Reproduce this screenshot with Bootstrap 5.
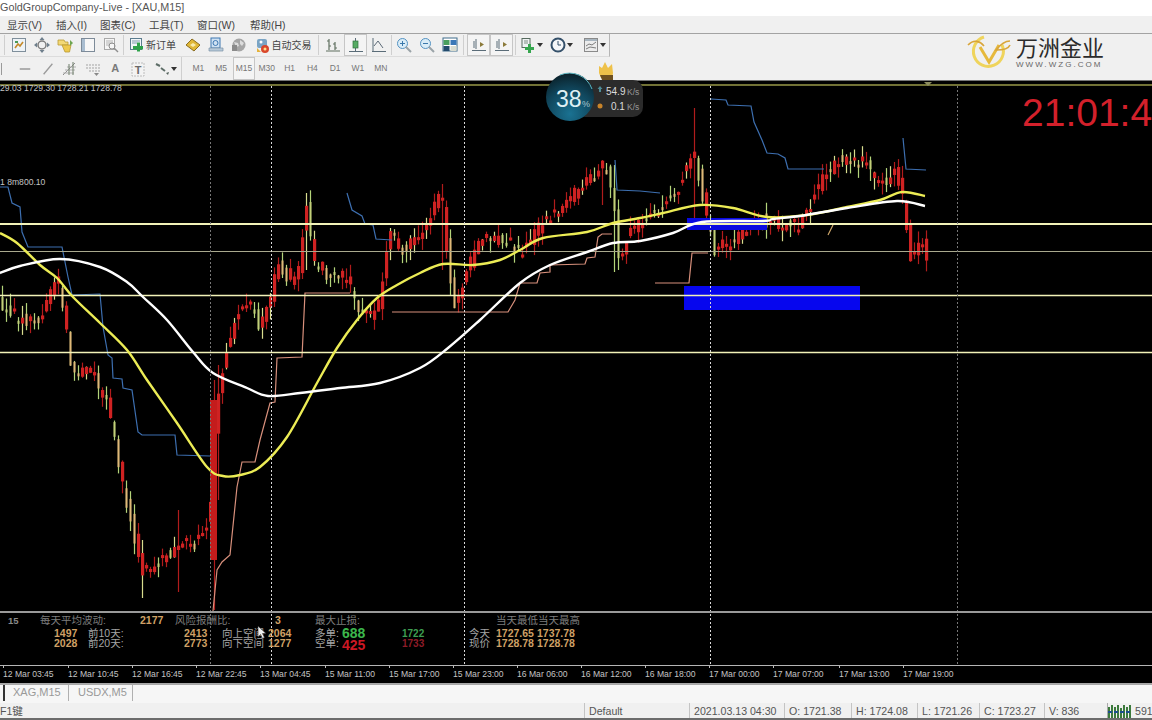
<!DOCTYPE html>
<html lang="zh">
<head>
<meta charset="utf-8">
<title>GoldGroupCompany-Live - [XAU,M15]</title>
<link href="https://cdn.jsdelivr.net/npm/bootstrap@5.3.0/dist/css/bootstrap.min.css" rel="stylesheet">
<style>
html,body{height:720px;overflow:hidden;background:#f0f0f0}
.t4-app{width:1152px;height:720px;position:relative;font-family:"Liberation Sans","Noto Sans CJK SC",sans-serif;color:#444}
.t4-title{height:16px;background:#fff;font-size:10.8px;line-height:14px;color:#555;white-space:nowrap}
.t4-menu{height:17px;background:#f0f0f0;font-size:10.5px;line-height:18px;color:#444;border-bottom:1px solid #a3a3a3;box-sizing:content-box}
.t4-menu span{position:relative}
.t4-mi{display:block;flex:none}
.t4-tools{height:46px;background:#f0f0f0}
.t4-row{height:23px;flex:none}
.t4-row1{border-bottom:1px solid #dcdcdc;width:610px;border-right:1px solid #b5b5b5}
.t4-b{height:22px;width:23px;flex:none;display:flex;align-items:center;justify-content:center;gap:1px;font-size:10px;color:#444;white-space:nowrap}
.t4-b svg{flex:none}
.t4-w22{width:22.5px}
.t4-on{background:#f4f4f4;outline:1px solid #c6c6c6;outline-offset:-1px}
.t4-per{width:22.8px;font-size:8.5px;color:#777;height:23px}
.t4-bar{width:1px;height:20px;background:#cfcfcf;flex:none}
.t4-chart{height:603px;background:#000;flex:none;border-top:1px solid #777;overflow:hidden}
.t4-chart svg{display:block}
.t4-blur{filter:blur(.6px)}
.t4-tabs{height:20px;background:#f6f6f6;border-top:2px solid #a8a8a8;font-size:11px;color:#999;line-height:17px}
.t4-tab{border-right:1px solid #b0b0b0;height:16px;line-height:15px;flex:none;white-space:nowrap}
.t4-status{height:17px;background:#f0f0f0;font-size:10.6px;color:#555;line-height:16px;border-bottom:2px solid #6c6c6c;white-space:nowrap;box-sizing:border-box;overflow:hidden}
.t4-cell{border-left:1px solid #c4c4c4;padding-left:4px;flex:none;height:15px}
.t4-logo{position:absolute;left:966px;top:33px;width:150px;height:46px}
.t4-logo b{position:absolute;left:50px;top:0;font:400 22px/27px "Noto Sans CJK SC",sans-serif;color:#2b2b2b;white-space:nowrap}
.t4-logo i{position:absolute;left:50px;top:27px;font:normal 8px/9px "Liberation Sans",sans-serif;letter-spacing:2.05px;color:#666;white-space:nowrap}
.t4-speed{position:absolute;left:545px;top:60px}
text{font-family:"Liberation Sans","Noto Sans CJK SC",sans-serif}
.t4-ax{font-size:8.6px;fill:#c4c4c4}
.t4-tan{font-size:10.5px;font-weight:700;fill:#cfa066}
.t4-dim{font-size:10.5px;fill:#7d7d7d}
.t4-lab{font-size:10.5px;fill:#a5a5a5}
</style>
</head>
<body class="m-0">
<svg width="0" height="0" class="position-absolute">
<defs>
<symbol id="i-chart" viewBox="0 0 16 16"><rect x="1.5" y="1.5" width="13" height="13" fill="#eef3f7" stroke="#7f8f9b"/><path d="M4 11l3-4 2 2 3-4" stroke="#c58a2a" stroke-width="1.6" fill="none"/><rect x="4" y="4" width="3" height="2" fill="#4a9a58"/></symbol>
<symbol id="i-move" viewBox="0 0 16 16"><circle cx="8" cy="8" r="4" fill="none" stroke="#7b7b7b" stroke-width="1.5"/><path d="M8 0l2.500 3h-5zM8 16l2.500-3h-5zM0 8l3-2.500v5zM16 8l-3-2.500v5z" fill="#6f7f8c"/></symbol>
<symbol id="i-folder" viewBox="0 0 16 16"><path d="M1 3h6l1 2h3v3H1z" fill="#f3d977" stroke="#b99a34" stroke-width=".8"/><path d="M5 8h9l-1.500 7H8z" fill="#eec94d" stroke="#b99a34" stroke-width=".8"/><path d="M13 3l3 3-3 3z" fill="#6ea550"/></symbol>
<symbol id="i-panel" viewBox="0 0 16 16"><rect x="1.500" y="1.500" width="13" height="13" fill="#f7f7f7" stroke="#7d8b99"/><rect x="2" y="2" width="3" height="12" fill="#a9bdd0"/></symbol>
<symbol id="i-docmag" viewBox="0 0 16 16"><rect x="1.500" y="1.500" width="10" height="11" fill="#f6f6f6" stroke="#a9a9a9"/><path d="M3 4h7M3 6h7M3 8h4" stroke="#b5b5b5"/><circle cx="9" cy="9" r="3" fill="none" stroke="#8e8e8e"/><path d="M11 11l4 4" stroke="#8e8e8e" stroke-width="1.500"/></symbol>
<symbol id="i-order" viewBox="0 0 16 16"><rect x="1.500" y="1.500" width="11" height="11" fill="#f2f6f8" stroke="#5b7c8e"/><path d="M3 4h8M3 6h5" stroke="#7f9bad"/><path d="M10 6v4H6v4h4v2h3v-2h3v-4h-3V6z" transform="translate(-2 0) scale(1 .9)" fill="#2ea24a"/></symbol>
<symbol id="i-dia" viewBox="0 0 16 16"><path d="M1 8l6-6 8 6-6 6z" fill="#e0b838" stroke="#8b6d1f"/><path d="M5 8l3-2 3 2-3 2z" fill="#f8ecb0"/></symbol>
<symbol id="i-blue" viewBox="0 0 16 16"><rect x="3" y="1" width="9" height="10" fill="#cfe1f2" stroke="#3e78b2"/><circle cx="7.500" cy="6" r="2.500" fill="none" stroke="#3e78b2"/><path d="M1 11h14v3H1z" fill="#b7c9d9" stroke="#7d94a8" stroke-width=".7"/></symbol>
<symbol id="i-globe" viewBox="0 0 16 16"><circle cx="8" cy="8" r="6.500" fill="#a5a5a5"/><path d="M3 5l4 1 1 3-3 1zM9 3l4 3-2 3-2-2z" fill="#dcdcdc"/><rect x="1" y="8" width="5" height="6" fill="#8a8a8a"/></symbol>
<symbol id="i-auto" viewBox="0 0 16 16"><rect x="2" y="2" width="10" height="9" rx="2" fill="#7aa4c4"/><circle cx="6" cy="5" r="1.500" fill="#fff"/><circle cx="10" cy="12" r="4" fill="#d9472b"/><circle cx="10" cy="12" r="1.500" fill="#ffe08a"/><path d="M2 11l4 4H2z" fill="#e5b23a"/></symbol>
<symbol id="i-bars" viewBox="0 0 16 16"><path d="M4 2v11M4 4H2M4 9h2M10 5v8M10 7H8M10 11h2M1 14h14" stroke="#5f6f5f" stroke-width="1.200" fill="none"/></symbol>
<symbol id="i-candle" viewBox="0 0 16 16"><path d="M7.500 1v13M1 14.500h14" stroke="#5a6c78" fill="none"/><rect x="5" y="4" width="5" height="7" fill="#56ab63" stroke="#2f6f3d" stroke-width=".7"/></symbol>
<symbol id="i-line" viewBox="0 0 16 16"><path d="M1 14.500h14M2 1v13" stroke="#5a6c78" fill="none"/><path d="M3 9l4-5 5 7" stroke="#5d6b78" fill="none"/></symbol>
<symbol id="i-zin" viewBox="0 0 16 16"><circle cx="6.500" cy="6.500" r="5" fill="#d9ecf7" stroke="#5492c2"/><path d="M4 6.500h5M6.500 4v5" stroke="#3a78ab"/><path d="M10 10l5 5" stroke="#9aa3a8" stroke-width="2"/></symbol>
<symbol id="i-zout" viewBox="0 0 16 16"><circle cx="6.500" cy="6.500" r="5" fill="#d9ecf7" stroke="#5492c2"/><path d="M4 6.500h5" stroke="#3a78ab"/><path d="M10 10l5 5" stroke="#9aa3a8" stroke-width="2"/></symbol>
<symbol id="i-grid" viewBox="0 0 16 16"><rect x="1" y="1" width="14" height="13" fill="#fff" stroke="#3f6d8c"/><rect x="1.500" y="3" width="6" height="5" fill="#4aa05e"/><rect x="8.500" y="3" width="6" height="5" fill="#3b78b8"/><rect x="1.500" y="9" width="6" height="5" fill="#234b6c"/><rect x="8.500" y="9" width="6" height="5" fill="#d9dcd0"/></symbol>
<symbol id="i-shift" viewBox="0 0 16 16"><path d="M5 2v10M3 4v7M1 13.500h14" stroke="#5a6c78" fill="none"/><path d="M9 5v5l4-2.500z" fill="#8b7a3a"/></symbol>
<symbol id="i-add" viewBox="0 0 16 16"><rect x="2" y="1.500" width="8" height="9" fill="#eef2f2" stroke="#566a5e"/><path d="M4 4h4M4 6h4" stroke="#7d8d82"/><path d="M8 7v3H5v3h3v3h3v-3h3v-3h-3V7z" fill="#35a64e"/></symbol>
<symbol id="i-clock" viewBox="0 0 16 16"><circle cx="8" cy="8" r="6.500" fill="#f5f7f9" stroke="#34506a" stroke-width="2"/><path d="M8 4v4h3" stroke="#34506a" fill="none"/></symbol>
<symbol id="i-tpl" viewBox="0 0 16 16"><rect x="1.500" y="1.500" width="13" height="13" fill="#ececec" stroke="#8a8a8a"/><rect x="2" y="2" width="12" height="2" fill="#a8b5bf"/><path d="M3 9l3-2 3 1 4-3M3 12l4-2 6 1" stroke="#7c7c7c" fill="none"/></symbol>
<symbol id="i-fib" viewBox="0 0 16 16"><path d="M1 14L13 2" stroke="#8b8b8b"/><path d="M3 9h10M5 6h9M1 12h11" stroke="#b0b0b0"/><path d="M7 3v11M11 1v13" stroke="#6f7f6a"/></symbol>
<symbol id="i-fan" viewBox="0 0 16 16"><path d="M1 4h14M1 7h14M4 10h11" stroke="#a3a3a3" stroke-dasharray="2 1"/><path d="M9 12h5l-2.500 3z" fill="#888"/></symbol>
<symbol id="i-tbox" viewBox="0 0 16 16"><path d="M2 2h12v13H2z" fill="#f3f3f3" stroke="#bcbcbc" stroke-dasharray="2 1"/><text x="8" y="12.500" font-size="11" text-anchor="middle" fill="#6a6a6a" font-weight="700">T</text></symbol>
<symbol id="i-shapes" viewBox="0 0 16 16"><path d="M2 3l4 2M7 7l4 3" stroke="#5e6e68" stroke-width="2"/><path d="M12 12l3-1-1 3z" fill="#54635d"/></symbol>
<symbol id="i-down" viewBox="0 0 6 4"><path d="M0 0h6L3 4z" fill="#333"/></symbol>
</defs>
</svg>

<div class="t4-app d-flex flex-column">
  <div class="t4-title">GoldGroupCompany-Live - [XAU,M15]</div>
  <nav class="t4-menu d-flex">
    <span class="t4-mi" style="margin-left:7px;width:49px">显示(V)</span>
    <span class="t4-mi" style="width:44px">插入(I)</span>
    <span class="t4-mi" style="width:49px">图表(C)</span>
    <span class="t4-mi" style="width:48px">工具(T)</span>
    <span class="t4-mi" style="width:53px">窗口(W)</span>
    <span class="t4-mi">帮助(H)</span>
  </nav>

  <div class="t4-tools d-flex flex-column">
    <div class="t4-row t4-row1 d-flex align-items-center">
      <div class="t4-bar" style="margin-left:4px;margin-right:2px"></div>
      <div class="t4-b"><svg width="16" height="16"><use href="#i-chart"/></svg></div>
      <div class="t4-b"><svg width="16" height="16"><use href="#i-move"/></svg></div>
      <div class="t4-b"><svg width="16" height="16"><use href="#i-folder"/></svg></div>
      <div class="t4-b"><svg width="16" height="16"><use href="#i-panel"/></svg></div>
      <div class="t4-b"><svg width="16" height="16"><use href="#i-docmag"/></svg></div>
      <div class="t4-bar" style="margin:0 .5px"></div>
      <div class="t4-b" style="width:57px"><svg width="16" height="16"><use href="#i-order"/></svg><span>新订单</span></div>
      <div class="t4-b"><svg width="16" height="16"><use href="#i-dia"/></svg></div>
      <div class="t4-b"><svg width="16" height="16"><use href="#i-blue"/></svg></div>
      <div class="t4-b"><svg width="16" height="16"><use href="#i-globe"/></svg></div>
      <div class="t4-b" style="width:66px"><svg width="16" height="16"><use href="#i-auto"/></svg><span>自动交易</span></div>
      <div class="t4-bar" style="margin:0 2px"></div>
      <div class="t4-b"><svg width="16" height="16"><use href="#i-bars"/></svg></div>
      <div class="t4-b t4-on"><svg width="16" height="16"><use href="#i-candle"/></svg></div>
      <div class="t4-b"><svg width="16" height="16"><use href="#i-line"/></svg></div>
      <div class="t4-bar" style="margin:0 .5px"></div>
      <div class="t4-b"><svg width="16" height="16"><use href="#i-zin"/></svg></div>
      <div class="t4-b"><svg width="16" height="16"><use href="#i-zout"/></svg></div>
      <div class="t4-b"><svg width="16" height="16"><use href="#i-grid"/></svg></div>
      <div class="t4-bar" style="margin:0 2px"></div>
      <div class="t4-b t4-on" style="margin-left:1px"><svg width="16" height="16"><use href="#i-shift"/></svg></div>
      <div class="t4-b t4-on"><svg width="16" height="16"><use href="#i-shift"/></svg></div>
      <div class="t4-bar" style="margin:0 1.500px"></div>
      <div class="t4-b" style="width:29px"><svg width="16" height="16"><use href="#i-add"/></svg><svg width="6" height="4"><use href="#i-down"/></svg></div>
      <div class="t4-b" style="width:30px"><svg width="16" height="16"><use href="#i-clock"/></svg><svg width="6" height="4"><use href="#i-down"/></svg></div>
      <div class="t4-b" style="width:31px;margin-left:3px"><svg width="16" height="16"><use href="#i-tpl"/></svg><svg width="6" height="4"><use href="#i-down"/></svg></div>
    </div>
    <div class="t4-row d-flex align-items-center">
      <div class="t4-bar" style="margin:0 12px 0 1px;background:#9a9a9a;height:12px"></div>
      <div class="t4-b t4-w22"><svg width="14" height="14" viewBox="0 0 16 16"><path d="M2 8h12" stroke="#8d8d8d" stroke-width="1.500"/></svg></div>
      <div class="t4-b t4-w22"><svg width="14" height="14" viewBox="0 0 16 16"><path d="M3 14L13 2" stroke="#9a9a9a" stroke-width="1.500"/></svg></div>
      <div class="t4-b t4-w22"><svg width="16" height="16"><use href="#i-fib"/></svg></div>
      <div class="t4-b t4-w22"><svg width="16" height="16"><use href="#i-fan"/></svg></div>
      <div class="t4-b t4-w22 fw-bold" style="font-size:11px;color:#7a7a7a">A</div>
      <div class="t4-b t4-w22"><svg width="16" height="16"><use href="#i-tbox"/></svg></div>
      <div class="t4-b" style="width:32px"><svg width="16" height="16"><use href="#i-shapes"/></svg><svg width="6" height="4"><use href="#i-down"/></svg></div>
      <div class="t4-bar" style="margin-right:5px;height:23px"></div>
      <div class="t4-b t4-per">M1</div>
      <div class="t4-b t4-per">M5</div>
      <div class="t4-b t4-per t4-on">M15</div>
      <div class="t4-b t4-per">M30</div>
      <div class="t4-b t4-per">H1</div>
      <div class="t4-b t4-per">H4</div>
      <div class="t4-b t4-per">D1</div>
      <div class="t4-b t4-per">W1</div>
      <div class="t4-b t4-per">MN</div>
    </div>
  </div>

  <div class="t4-chart">
    <svg id="plot" width="1152" height="602" viewBox="0 81 1152 602" xmlns="http://www.w3.org/2000/svg">
      <defs><clipPath id="cw"><rect x="0" y="86" width="1152" height="525"/></clipPath></defs>
      <g clip-path="url(#cw)">
        <g class="t4-blur">
          <g id="candles"></g>
          <rect x="210" y="400" width="7" height="160" fill="#c41c1c"/>
          <rect x="684" y="286" width="176" height="24" fill="#0606ee"/>
          <rect x="687" y="218" width="80" height="12" fill="#0a0ae0"/>
          <g fill="none" stroke="#3d6fb0" stroke-width="1.200">
            <polyline points="0,187 8,187 12,203 20,207 22,232 28,247 62,247 68,277 72,295 100,294 103,327 108,355 112,358 113,378 122,379 123,388 132,390 138,432 142,435 175,435 177,455 210,456"/>
            <polyline points="347,193 352,210 362,216 365,224 373,225 376,239 392,240"/>
            <polyline points="615,160 617,190 640,191 660,193"/>
            <polyline points="711,99 726,100 728,105 751,106 754,122 762,140 767,153 778,154 785,158 788,169 824,169"/>
            <polyline points="903,138 906,169 926,170"/>
          </g>
          <g fill="none" stroke="#d8907c" stroke-width="1.200">
            <polyline points="213,611 217,570 222,562 230,555 237,487 242,462 255,462 260,440 270,403 275,402 277,358 302,357 305,293 350,293"/>
            <polyline points="392,312 508,312 515,300 520,283 537,283 540,273 550,272 550,265 585,264 587,258 595,257 598,237 602,234 612,234"/>
            <polyline points="655,283 689,283 692,253 708,253"/>
            <path d="M828 235l5-10M822 223.500h84" stroke="#c9a468"/>
          </g>
        </g>
        <g stroke="#f2f2b8">
          <path d="M0 224h1152" stroke-width="2"/>
          <path d="M0 295.500h1152" stroke-width="1.500"/>
          <path d="M0 352.500h1152" stroke-width="1.500"/>
          <path d="M0 251.500h1152" stroke="#a9a98e" stroke-width="1"/>
        </g>
        <g fill="none" stroke-linejoin="round" class="t4-blur">
          <path class="t4-ma" stroke="#ecec55" stroke-width="2.400" data-p="0,233 17,243 40,265 57,278 73,297 100,323 127,350 147,380 177,423 207,467 223,476 240,475 260,467 287,437 317,383 337,348 357,320 377,298 397,285 420,273 443,264 473,265 500,260 520,250 543,238 587,232 613,223 640,218 663,213 700,205 733,208 767,217 807,215 847,207 880,200 902,192 925,196"/>
          <path class="t4-ma" stroke="#fff" stroke-width="2.400" data-p="0,273 20,266 60,259 100,267 127,282 143,297 167,320 193,352 213,373 247,388 268,396 300,393 340,388 380,383 420,368 448,348 480,320 520,283 550,265 587,252 613,243 640,241 673,233 702,222 763,221 773,219 800,216 847,208 897,201 925,206"/>
        </g>
      </g>

      <g fill="none" stroke-dasharray="2 2">
        <path d="M210.500 86v580M957.500 86v580" stroke="#777"/>
        <path d="M271.500 86v580M464.500 86v580M710.500 86v580" stroke="#d8d8d8"/>
      </g>
      <path d="M0 85h1152" stroke="#e4e46a" stroke-width="1.200"/>
      <path d="M924 82h8l-4 4z" fill="#8c8c60"/>
      <path d="M0 612h1152" stroke="#9a9a9a" stroke-width="2"/>
      <path d="M0 665.500h1152" stroke="#b5b5b5"/>

      <text class="t4-ax" x="0" y="91">29.03 1729.30 1728.21 1728.78</text>
      <text class="t4-ax" x="0" y="185">1 8m800.10</text>
      <text x="1022" y="126" font-size="39" fill="#d3202b">21:01:4</text>

      <text x="8" y="624" font-size="9.500" font-weight="700" fill="#8a8a8a">15</text>
      <text class="t4-dim" x="40" y="624">每天平均波动:</text>
      <text class="t4-tan" x="140" y="624">2177</text>
      <text class="t4-dim" x="175" y="624">风险报酬比:</text>
      <text class="t4-tan" x="275" y="624">3</text>
      <text class="t4-dim" x="315" y="624">最大止损:</text>
      <text class="t4-dim" x="496" y="624">当天最低当天最高</text>

      <text class="t4-tan" x="54" y="637">1497</text>
      <text class="t4-lab" x="88" y="637">前10天:</text>
      <text class="t4-tan" x="184" y="637">2413</text>
      <text class="t4-lab" x="222" y="637">向上空间</text>
      <text class="t4-tan" x="268" y="637">2064</text>
      <text class="t4-lab" x="315" y="637">多单:</text>
      <text x="342" y="638" font-size="14" font-weight="700" fill="#3cb84c">688</text>
      <text x="402" y="637" font-size="10" font-weight="700" fill="#3e9e52">1722</text>
      <text class="t4-lab" x="469" y="637">今天</text>
      <text class="t4-tan" x="496" y="637">1727.65</text>
      <text class="t4-tan" x="537" y="637">1737.78</text>

      <text class="t4-tan" x="54" y="647">2028</text>
      <text class="t4-lab" x="88" y="647">前20天:</text>
      <text class="t4-tan" x="184" y="647">2773</text>
      <text class="t4-lab" x="222" y="647">向下空间</text>
      <text class="t4-tan" x="268" y="647">1277</text>
      <text class="t4-lab" x="315" y="647">空单:</text>
      <text x="342" y="650" font-size="14" font-weight="700" fill="#cc1824">425</text>
      <text x="402" y="647" font-size="10" font-weight="700" fill="#8e1c28">1733</text>
      <text class="t4-lab" x="469" y="647">现价</text>
      <text class="t4-tan" x="496" y="647">1728.78</text>
      <text class="t4-tan" x="537" y="647">1728.78</text>

      <path d="M258 626v11l2.500-2.500 2 4 2-1-2-4h3.500z" fill="#eee" stroke="#222" stroke-width=".6"/>

      <g id="axis"></g>
    </svg>
  </div>

  <div class="t4-tabs d-flex">
    <div class="t4-tab" style="width:5px;border-right:2px solid #333"></div>
    <div class="t4-tab" style="width:64px;padding-left:8px">XAG,M15</div>
    <div class="t4-tab" style="width:64px;padding-left:9px">USDX,M5</div>
  </div>

  <div class="t4-status d-flex">
    <div style="width:584px" class="flex-shrink-0">F1键</div>
    <div class="t4-cell" style="width:105px">Default</div>
    <div class="t4-cell" style="width:95px">2021.03.13 04:30</div>
    <div class="t4-cell" style="width:67px">O: 1721.38</div>
    <div class="t4-cell" style="width:66px">H: 1724.08</div>
    <div class="t4-cell" style="width:62px">L: 1721.26</div>
    <div class="t4-cell" style="width:65px">C: 1723.27</div>
    <div class="t4-cell" style="width:63px">V: 836</div>
    <div class="t4-cell d-flex align-items-center gap-1" style="border-left-color:#aaa;padding-left:0">
      <svg width="23" height="14" viewBox="0 0 23 14"><path d="M1 3v11M4 1v13M7 3v11M10 1v13M13 4v10M16 1v13M19 3v11M22 1v13" stroke="#3c7a3c" stroke-width="2"/><path d="M0 8h23" stroke="#1d4f8c" stroke-width="2" stroke-dasharray="4 2"/></svg>
      <span>591/1</span>
    </div>
  </div>

  <div class="t4-logo">
    <svg width="50" height="42" viewBox="0 0 50 42" class="position-absolute" style="left:0;top:0">
      <path d="M18 4a15 15 0 1 0 18 8" fill="none" stroke="#efd45c" stroke-width="3"/>
      <path d="M14 14l9 15 10-17" fill="none" stroke="#e6b93c" stroke-width="3"/>
      <path d="M2 12c6-6 12-4 16 1M44 8c-6 0-10 4-14 9 4 0 12 0 14-5" fill="none" stroke="#d9a53a" stroke-width="1.600"/>
    </svg>
    <b>万洲金业</b>
    <i>WWW.WZG.COM</i>
  </div>

  <svg class="t4-speed" width="105" height="66" viewBox="0 0 105 66" xmlns="http://www.w3.org/2000/svg">
    <defs><radialGradient id="gb" cx=".5" cy=".85" r=".85"><stop offset="0" stop-color="#1a7292"/><stop offset=".6" stop-color="#10465c"/><stop offset="1" stop-color="#0a2028"/></radialGradient></defs>
    <rect x="30" y="20" width="68" height="37" rx="10" fill="#2b2b2b"/>
    <circle cx="25" cy="37" r="24" fill="url(#gb)"/>
    <path d="M15 15a24 24 0 0 1 32 14" fill="none" stroke="#5fb6c2" stroke-width="1"/>
    <text x="11" y="47" font-size="23" fill="#dff0f4">38</text>
    <text x="37" y="47" font-size="9" fill="#a9c8d0">%</text>
    <path d="M55 26l2.500 3h-1.500v3h-2v-3h-1.500z" fill="#4d8b96"/>
    <circle cx="55" cy="46" r="2.500" fill="#c8842a"/>
    <text x="61" y="35" font-size="10" fill="#dcdcdc">54.9</text>
    <text x="82" y="35" font-size="8.500" fill="#999">K/s</text>
    <text x="66" y="50" font-size="10" fill="#dcdcdc">0.1</text>
    <text x="82" y="50" font-size="8.500" fill="#999">K/s</text>
    <path d="M54 6l3 2 3-6 3 6 4-4 1 9 -1 5H56l-2-5z" fill="#eec14a"/>
    <path d="M55 15h13v5H57z" fill="#6e5020"/>
  </svg>
</div>

<script src="https://cdn.jsdelivr.net/npm/bootstrap@5.3.0/dist/js/bootstrap.bundle.min.js"></script>
<script>
(function(){
  var pts=[[0,305],[20,320],[40,320],[55,275],[62,310],[70,370],[90,370],[105,400],[120,480],[140,570],[160,560],[178,545],[195,545],[208,520],[215,400],[222,365],[235,310],[245,300],[258,325],[270,300],[275,265],[295,285],[305,200],[312,260],[325,280],[345,275],[355,310],[375,315],[390,225],[400,250],[415,240],[440,190],[445,245],[452,310],[465,270],[480,240],[505,240],[520,255],[540,225],[560,205],[590,175],[603,165],[612,200],[618,265],[625,235],[650,215],[675,190],[692,150],[700,190],[712,250],[725,245],[745,225],[760,220],[785,225],[800,225],[815,190],[835,160],[860,160],[880,185],[895,170],[903,210],[908,260],[920,240],[925,255]];
  function c(x){for(var i=1;i<pts.length;i++){if(x<=pts[i][0]){var a=pts[i-1],b=pts[i];return a[1]+(b[1]-a[1])*(x-a[0])/(b[0]-a[0]);}}return pts[pts.length-1][1];}
  var s=12345;function r(){s=(s*16807)%2147483647;return s/2147483647;}
  var spikes={694:[108,230],142:[540,598],178:[510,592],614:[165,272],452:[215,320],306:[193,270],442:[184,270],602:[160,205],904:[205,265],214:[380,610],218:[365,500]};
  var g=document.getElementById("candles"),html="";
  for(var x=1;x<=925;x+=4){
    var o=c(x-4)+(r()-.5)*14,cl=c(x)+(r()-.5)*14;
    var up=cl<o;
    var top=Math.min(o,cl),bot=Math.max(o,cl);
    if(bot-top<3)bot=top+3;
    var hi=top-r()*12,lo=bot+r()*12;
    var k=x+1;
    if(spikes[k]){hi=spikes[k][0];lo=spikes[k][1];}
    var red=up||r()>.6||x>905;
    var wick=red?(r()>.72?"#d8dc8e":"#b01c1c"):"#b4d47a";
    var body=red?"#cf2222":(r()>.5?"#e0b878":"#c2cf78");
    html+='<rect x="'+(x+.9)+'" y="'+hi+'" width="1.200" height="'+(lo-hi)+'" fill="'+wick+'"/>';
    html+='<rect x="'+(red?x:x+.5)+'" y="'+top+'" width="'+(red?3.2:2)+'" height="'+(bot-top)+'" fill="'+body+'"/>';
  }
  g.innerHTML=html;
  document.querySelectorAll(".t4-ma").forEach(function(el){
    var p=el.getAttribute("data-p").split(" ").map(function(q){return q.split(",").map(Number);});
    var d="M"+p[0][0]+" "+p[0][1];
    for(var i=0;i<p.length-1;i++){
      var p0=p[Math.max(i-1,0)],p1=p[i],p2=p[i+1],p3=p[Math.min(i+2,p.length-1)];
      d+="C"+(p1[0]+(p2[0]-p0[0])/6)+" "+(p1[1]+(p2[1]-p0[1])/6)+" "+(p2[0]-(p3[0]-p1[0])/6)+" "+(p2[1]-(p3[1]-p1[1])/6)+" "+p2[0]+" "+p2[1];
    }
    el.setAttribute("d",d);
  });
  var labs=[[3,"12 Mar 03:45"],[68,"12 Mar 10:45"],[132,"12 Mar 16:45"],[196,"12 Mar 22:45"],[260,"13 Mar 04:45"],[325,"15 Mar 11:00"],[389,"15 Mar 17:00"],[453,"15 Mar 23:00"],[517,"16 Mar 06:00"],[581,"16 Mar 12:00"],[645,"16 Mar 18:00"],[709,"17 Mar 00:00"],[773,"17 Mar 07:00"],[839,"17 Mar 13:00"],[903,"17 Mar 19:00"]];
  var h="";
  labs.forEach(function(l){
    h+='<path d="M'+(l[0]+.5)+' 666v2" stroke="#bbb"/><text class="t4-ax" x="'+l[0]+'" y="677">'+l[1]+'</text>';
  });
  document.getElementById("axis").innerHTML=h;
})();
</script>
</body>
</html>
